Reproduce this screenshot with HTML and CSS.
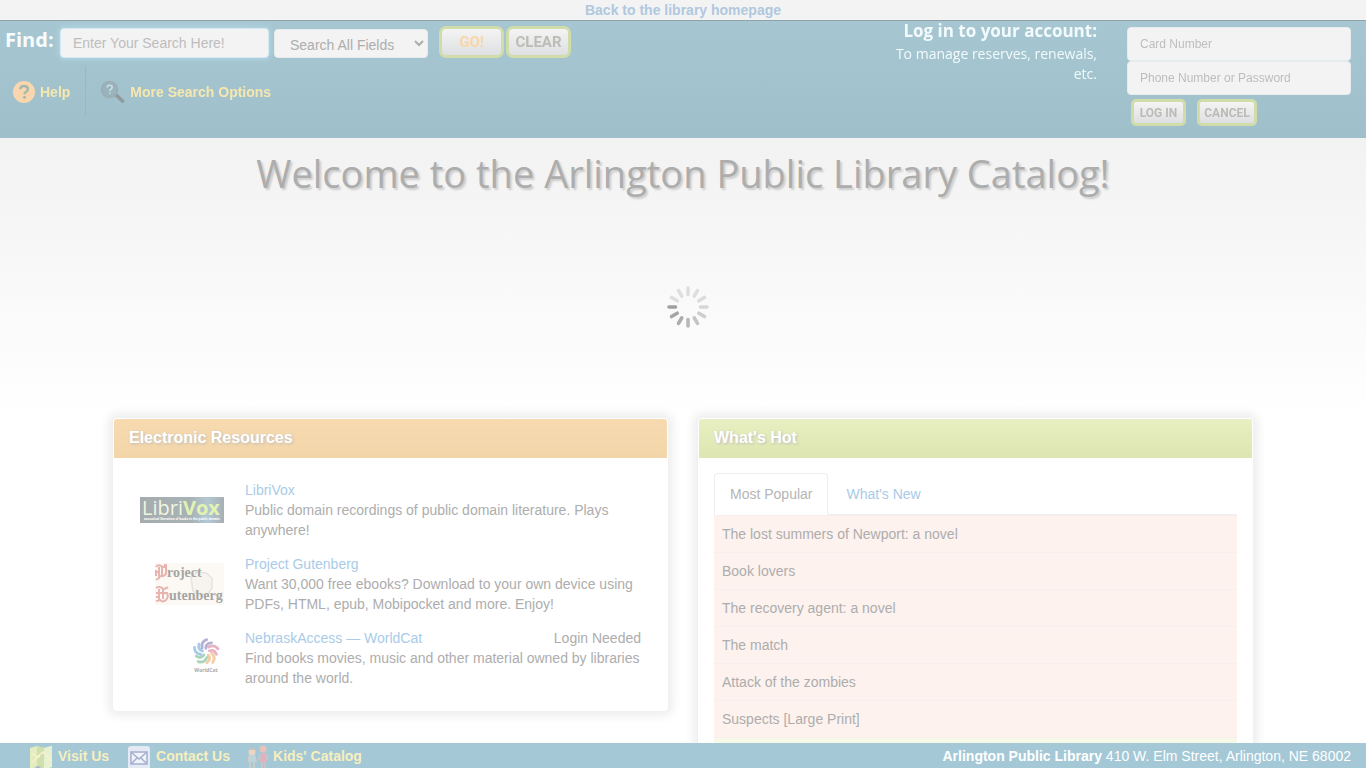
FILE: index.html
```html
<!DOCTYPE html>
<html lang="en">
<head>
<meta charset="utf-8">
<title>Arlington Public Library Catalog</title>
<link rel="stylesheet" href="styles.css">
</head>
<body>
<nav class="home-bar"><a href="#">Back to the library homepage</a></nav>

<header class="site-header">
  <div class="search-side">
    <form class="search-form">
      <label class="find-label" for="q">Find:</label>
      <input class="field search-input" id="q" type="text" placeholder="Enter Your Search Here!" autofocus>
      <select class="field search-select" aria-label="Search field"><option>Search All Fields</option></select>
      <div class="button-pair">
        <button class="btn btn-go" type="submit">GO!</button>
        <button class="btn" type="reset">CLEAR</button>
      </div>
    </form>
    <div class="header-links">
      <a class="help-link" href="#">
        <svg width="22" height="22" viewBox="0 0 22 22" aria-hidden="true"><circle cx="11" cy="11" r="11" fill="#f9d6ae"/><path d="M7.300 8.300C7.400 6 9 5 11 5c2.200 0 3.900 1.200 3.900 3.200C14.900 10.700 11.500 10.900 11.500 13.300" fill="none" stroke="#a5b8ae" stroke-width="2.500"/><circle cx="11.500" cy="16.300" r="1.500" fill="#a5b8ae"/></svg>
        Help</a>
      <a class="more-link" href="#">
        <svg width="25" height="24" viewBox="0 0 25 24" aria-hidden="true"><path d="M15.500 14.500L22.500 21" stroke="#91999a" stroke-width="3.600" stroke-linecap="round"/><circle cx="9.500" cy="9.500" r="7.800" fill="#9ab4bd" stroke="#9caeb5" stroke-width="2"/><path d="M7 7.500C7.200 5.700 8.300 5.200 9.600 5.200c1.500 0 2.600.8 2.600 2.100 0 1.900-2.500 1.900-2.500 3.900M9.700 12.500v1.600" fill="none" stroke="#c9e0e2" stroke-width="1.500"/></svg>
        More Search Options</a>
    </div>
  </div>
  <div class="login-text">
    <h2>Log in to your account:</h2>
    <p>To manage reserves, renewals, etc.</p>
  </div>
  <form class="login-form">
    <input class="field login-input" type="text" placeholder="Card Number" aria-label="Card Number">
    <input class="field login-input" type="password" placeholder="Phone Number or Password" aria-label="Phone Number or Password">
    <div class="login-buttons">
      <button class="btn btn-small" type="submit">LOG IN</button>
      <button class="btn btn-small" type="button">CANCEL</button>
    </div>
  </form>
</header>

<main class="content">
  <h1>Welcome to the Arlington Public Library Catalog!</h1>
  <div class="panels">
    <section class="panel">
      <h2 class="panel-title orange">Electronic Resources</h2>
      <ul class="resources">
        <li class="resource">
          <svg class="logo" width="84" height="26" viewBox="0 0 84 26" role="img" aria-label="LibriVox">
            <defs><linearGradient id="lv"><stop offset="0" stop-color="#a5acae"/><stop offset=".6" stop-color="#a8b2b5"/><stop offset=".8" stop-color="#b3c8d2"/><stop offset="1" stop-color="#a7b0b4"/></linearGradient></defs>
            <rect width="84" height="26" fill="url(#lv)"/>
            <text class="lv-name" x="2" y="18" fill="#eff6e0">Libri<tspan class="lv-bold" fill="#e2f2b4">Vox</tspan></text>
            <text class="lv-tag" x="4" y="23" fill="#fff">acoustical liberation of books in the public domain</text>
          </svg>
          <div><a href="#">LibriVox</a><p>Public domain recordings of public domain literature. Plays anywhere!</p></div>
        </li>
        <li class="resource">
          <svg class="logo" width="69" height="42" viewBox="0 0 69 42" role="img" aria-label="Project Gutenberg">
            <rect width="69" height="42" fill="#fcf8f3"/>
            <path d="M36 14l6-5 9 1 6 5v10l-4 6-9 1-6-4z" fill="#f7f4f0" stroke="#e6e2df" stroke-width="1.500"/>
            <text class="pg" x="12" y="14" fill="#a5a5a3">roject</text>
            <text class="pg" x="14" y="37" fill="#a5a5a3">utenberg</text>
            <g fill="none" stroke="#e8b4b0" stroke-width="2"><path d="M1 4q2-3 5-1t5 0v8q-3 3-6 2M4 4v11l-3 2M7 4v9M1 7v6M1 9h4M10 1v3"/><path d="M1 25q3-2 6 0t6-1M4 26v11M8 26v10M1 30h11q2 4-1 7t-6 0l-4 1M1 34h3"/></g>
          </svg>
          <div><a href="#">Project Gutenberg</a><p>Want 30,000 free ebooks? Download to your own device using PDFs, HTML, epub, Mobipocket and more. Enjoy!</p></div>
        </li>
        <li class="resource">
          <svg class="logo" width="37" height="42" viewBox="0 0 37 42" role="img" aria-label="WorldCat">
            <defs><path id="arm" d="M-11.500-4.500Q-11.500 1.500-5 2.500M-7-8Q-8.500-2.500-3.500-1"/></defs>
            <g fill="none" stroke-width="2.800" stroke-linecap="round" transform="translate(19 15)">
              <use href="#arm" stroke="#a5cbe6"/>
              <use href="#arm" stroke="#b5b2d6" transform="rotate(72)"/>
              <use href="#arm" stroke="#e7b2c6" transform="rotate(144)"/>
              <use href="#arm" stroke="#f4cda5" transform="rotate(216)"/>
              <use href="#arm" stroke="#aad5bb" transform="rotate(288)"/>
            </g>
            <text class="wc" x="19" y="35" text-anchor="middle" fill="#aaa">WorldCat</text>
          </svg>
          <div><div class="link-row"><a href="#">NebraskAccess — WorldCat</a><span>Login Needed</span></div><p>Find books movies, music and other material owned by libraries around the world.</p></div>
        </li>
      </ul>
    </section>
    <section class="panel">
      <h2 class="panel-title green">What's Hot</h2>
      <div class="hot">
        <div class="tabs" role="tablist">
          <a class="tab active" href="#" role="tab" aria-selected="true">Most Popular</a>
          <a class="tab" href="#" role="tab">What's New</a>
        </div>
        <table class="titles">
          <tr><td>The lost summers of Newport: a novel</td></tr>
          <tr><td>Book lovers</td></tr>
          <tr><td>The recovery agent: a novel</td></tr>
          <tr><td>The match</td></tr>
          <tr><td>Attack of the zombies</td></tr>
          <tr><td>Suspects [Large Print]</td></tr>
          <tr class="alt"><td></td></tr>
        </table>
      </div>
    </section>
  </div>
</main>

<svg class="spinner" width="42" height="42" viewBox="-21 -21 42 42" role="img" aria-label="Loading">
  <g stroke-width="3.600" stroke-linecap="round">
    <path d="M0-12.500V-19" stroke="#dedede"/>
    <path d="M0-12.500V-19" stroke="#dedede" transform="rotate(30)"/>
    <path d="M0-12.500V-19" stroke="#dcdcdc" transform="rotate(60)"/>
    <path d="M0-12.500V-19" stroke="#d6d6d6" transform="rotate(90)"/>
    <path d="M0-12.500V-19" stroke="#cecece" transform="rotate(120)"/>
    <path d="M0-12.500V-19" stroke="#c4c4c4" transform="rotate(150)"/>
    <path d="M0-12.500V-19" stroke="#b8b8b8" transform="rotate(180)"/>
    <path d="M0-12.500V-19" stroke="#acacac" transform="rotate(210)"/>
    <path d="M0-12.500V-19" stroke="#a6a6a6" transform="rotate(240)"/>
    <path d="M0-12.500V-19" stroke="#a0a0a0" transform="rotate(270)"/>
    <path d="M0-12.500V-19" stroke="#dedede" transform="rotate(300)"/>
    <path d="M0-12.500V-19" stroke="#dedede" transform="rotate(330)"/>
  </g>
</svg>

<footer class="site-footer">
  <nav class="footer-links">
    <a href="#"><svg width="24" height="24" viewBox="0 0 24 24" aria-hidden="true"><path d="M1 3l7-2 7 2 8-2v21l-8 2-7-2-7 2z" fill="#e4edc0"/><path d="M8 1l7 2v21l-7-2z" fill="#cfdfb0"/><path d="M15 3l8-2v21l-8 2z" fill="#e8f0d2"/><path d="M3 8l5 4 6-5 8 9M2 18l9-7" fill="none" stroke="#f6f3c6" stroke-width="1.500"/><circle cx="9" cy="24" r="3" fill="#aeb9c6"/></svg>Visit Us</a>
    <a href="#"><svg width="24" height="24" viewBox="0 0 24 24" aria-hidden="true"><rect x="1" y="1" width="22" height="24" rx="3" fill="#e4eaf3"/><rect x="4" y="7" width="16" height="12" fill="#f0f3f8" stroke="#a5afd0" stroke-width="1.500"/><path d="M4 7l8 7 8-7M4 19l6-6M20 19l-6-6" fill="none" stroke="#a5afd0" stroke-width="1.500"/></svg>Contact Us</a>
    <a href="#"><svg width="20" height="24" viewBox="3 0 20 24" aria-hidden="true"><circle cx="7" cy="7" r="3.500" fill="#ead5c5"/><path d="M3 5q4-5 8 0z" fill="#c8c3b5"/><path d="M4 10h6v7H4z" fill="#b9d5df"/><path d="M5 17v7M9 17v7M4 11l-1 6M10 11l1 6" stroke="#d8cbc2" stroke-width="1.500"/><circle cx="18" cy="4" r="3.500" fill="#e8c2bd"/><path d="M16 8h5l1 9h-7z" fill="#dfb2bf"/><path d="M17 17v7M20 17v7M15 9l-1 6M22 9v6" stroke="#d6c0c3" stroke-width="1.500"/></svg>Kids' Catalog</a>
  </nav>
  <address><strong>Arlington Public Library</strong> 410 W. Elm Street, Arlington, NE 68002</address>
</footer>
</body>
</html>
```
FILE: styles.css
```css
* { box-sizing: border-box; }

html { height: 100%; overflow: hidden; }

body {
  margin: 0;
  height: 100%;
  overflow: hidden;
  background: #fff;
  color: #adadad;
  font: 14px/20px "Liberation Sans", Arial, sans-serif;
}

h1, h2, p, ul { margin: 0; padding: 0; }
a { color: #a9cbe8; text-decoration: none; }
svg { display: block; flex: none; }

.home-bar {
  height: 21px;
  background: #f3f3f3;
  border-bottom: 1px solid #8fa2a7;
  text-align: center;
  font-weight: bold;
}
.home-bar a { color: #b0c8de; }

.site-header {
  display: flex;
  height: 117px;
  padding-right: 15px;
  background: linear-gradient(#a6c7d1, #9fc0ca);
}
.search-side { flex: 1; }

.search-form {
  display: flex;
  align-items: flex-start;
  gap: 5px;
  padding: 5px 0 0 5px;
}
.find-label {
  width: 50px;
  color: #f8fcfd;
  font: bold 20px/28px "Open Sans", sans-serif;
}
.field {
  border: 1px solid #e6ebed;
  border-radius: 4px;
  background: #f3f3f3;
  color: #adadad;
  font: 14px/20px "Liberation Sans", Arial, sans-serif;
}
.field::placeholder { color: #bdbdbd; opacity: 1; }
.search-input {
  width: 209px;
  height: 30px;
  margin-top: 2px;
  padding: 0 12px;
  border-color: #d5e9f5;
  outline: 0;
  box-shadow: 0 0 6px #bbdcf0;
}
.search-select {
  width: 154px;
  height: 29px;
  margin-top: 3px;
  padding: 2px 0 0 11px;
}
.button-pair { display: flex; gap: 2px; margin-left: 6px; }

.btn {
  width: 65px;
  height: 32px;
  padding: 0;
  border: 3px solid #d0dcaa;
  border-radius: 7px;
  background: linear-gradient(#f4f4f4, #dedfe1);
  color: #bcbcb6;
  font: bold 15px/20px Roboto, sans-serif;
}
.btn-go { color: #f8d6a8; }
.btn-small {
  width: 60px;
  height: 27px;
  border-radius: 5px;
  font-size: 12px;
}
.btn-small:first-child { width: 55px; }

.header-links {
  display: flex;
  margin-top: 8px;
  padding-left: 13px;
  font-weight: bold;
}
.header-links a {
  display: flex;
  align-items: center;
  gap: 5px;
  height: 51px;
  color: #f6e7b0;
}
.help-link { padding-right: 15px; border-right: 1px solid #98b9c4; }
.more-link { padding-left: 14px; }

.login-text {
  width: 208px;
  color: #f3fafc;
  text-align: right;
  font: 14px/20px "Open Sans", sans-serif;
}
.login-text h2 { font-size: 17px; line-height: 20px; white-space: nowrap; }
.login-text p { padding-top: 3px; }

.login-form { width: 224px; margin-left: 30px; padding-top: 6px; }
.login-input {
  display: block;
  width: 100%;
  height: 34px;
  padding: 0 12px;
  font-size: 12px;
}
.login-buttons { display: flex; gap: 11px; padding: 4px 0 0 4px; }

.content {
  background: linear-gradient(#f2f2f2, #fff 280px);
  overflow: hidden;
}
h1 {
  height: 280px;
  padding-top: 10px;
  color: #adadad;
  font: 38px/50px "Open Sans", sans-serif;
  text-align: center;
  text-shadow: 2px 2px 2px #ccc;
}
.panels {
  display: grid;
  grid-template-columns: 1fr 1fr;
  align-items: start;
  gap: 30px;
  max-width: 1170px;
  margin: 0 auto;
  padding: 0 15px 15px;
}
.panel {
  border: 1px solid #fff;
  border-radius: 4px;
  background: #fff;
  box-shadow: 0 0 10px 5px #eee;
}
.panel-title {
  height: 39px;
  padding: 0 15px;
  border-radius: 3px 3px 0 0;
  color: #fff;
  font-size: 16px;
  line-height: 38px;
  text-shadow: 1px 1px 3px #bbb;
}
.orange { background: linear-gradient(#f8dab0, #f2d5a9); }
.green { background: linear-gradient(#e8efc2, #dde6b0); }

.resources {
  display: grid;
  gap: 14px;
  padding: 22px 22px 22px 15px;
  list-style: none;
}
.resource {
  display: grid;
  grid-template-columns: 95px 1fr;
  align-items: center;
  gap: 21px;
}
.logo { justify-self: end; }
.link-row { display: flex; justify-content: space-between; padding-right: 4px; }
.lv-name { font: 20px/20px "Open Sans", sans-serif; }
.lv-bold { font-weight: bold; }
.lv-tag { font: bold 3px "Open Sans", sans-serif; }
.pg { font: bold 14px "Liberation Serif", serif; }
.wc { font: bold 5px "Open Sans", sans-serif; }

.hot { padding: 15px; }
.tabs { display: flex; gap: 2px; border-bottom: 1px solid #eee; }
.tab {
  height: 42px;
  margin-bottom: -1px;
  padding: 10px 15px;
  border: 1px solid transparent;
  border-radius: 4px 4px 0 0;
}
.tab.active {
  border-color: #eee #eee #fff;
  background: #fff;
  color: #b5b5b5;
}
.titles { width: 100%; border-collapse: collapse; }
.titles td {
  height: 37px;
  padding: 8px;
  border-top: 1px solid #f8efec;
  background: #fdf2ee;
}
.titles .alt td { background: #f6f9e8; }

.spinner {
  position: fixed;
  top: 40%;
  left: 50%;
  margin: -21px 0 0 -16px;
}

.site-footer {
  position: fixed;
  right: 0;
  bottom: 0;
  left: 0;
  display: flex;
  justify-content: space-between;
  height: 25px;
  padding: 2px 15px 0 29px;
  overflow: hidden;
  background: #a4c8d6;
  color: #fff;
  line-height: 22px;
}
.footer-links { display: flex; gap: 18px; font-weight: bold; }
.footer-links a { display: flex; gap: 5px; color: #f7efbd; }
address { font-style: normal; }
```
